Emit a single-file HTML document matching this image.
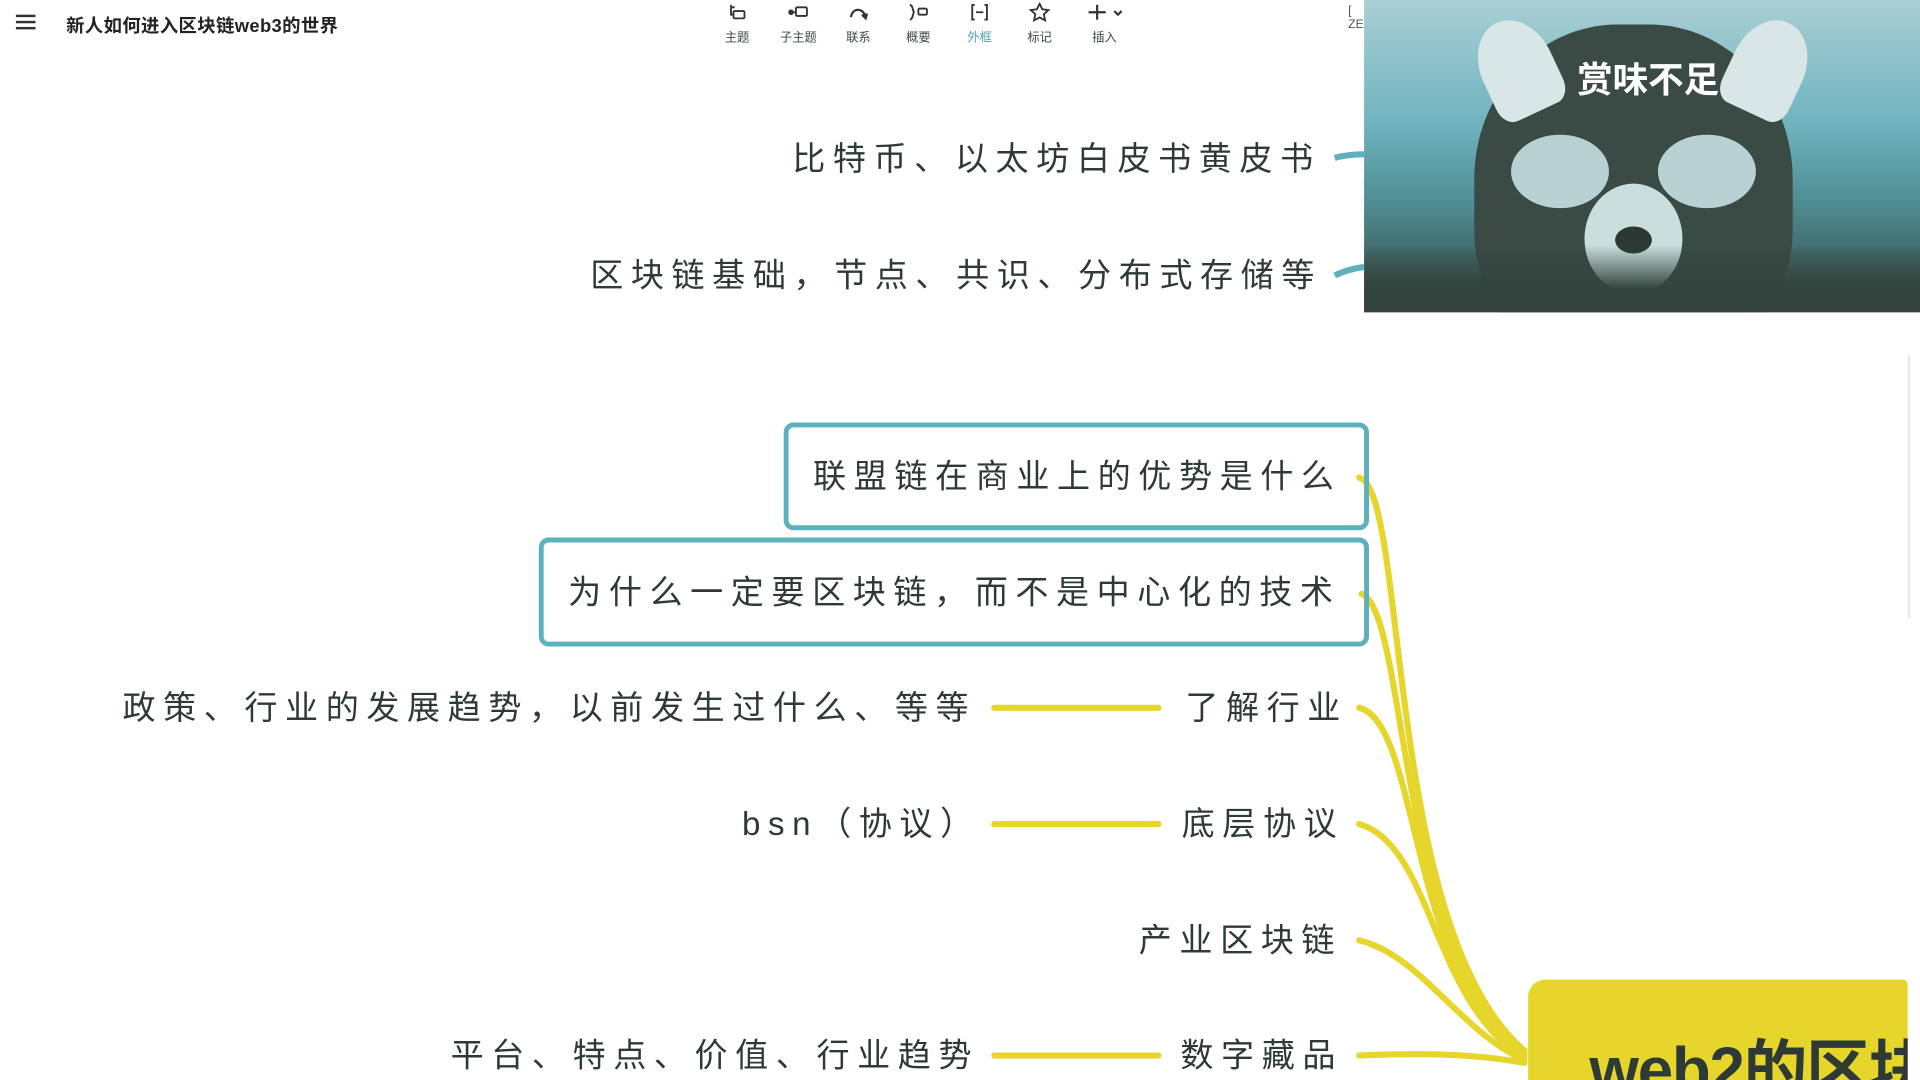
<!DOCTYPE html>
<html><head><meta charset="utf-8"><style>
html,body{margin:0;padding:0;width:1920px;height:1080px;overflow:hidden;background:#fff}
#s{position:absolute;left:0;top:0;width:1568px;height:882px;overflow:hidden;transform:scale(1.22449,1.22449);transform-origin:0 0;font-family:"Liberation Sans","Noto Sans CJK SC",sans-serif;color:#2e3a36}
.t{position:absolute;font-size:27px;letter-spacing:6.2px;white-space:nowrap;line-height:30px}
.box{position:absolute;border:4px solid #5fb0bd;border-radius:8px;box-sizing:border-box}
.tb{position:absolute;top:2px;text-align:center;font-size:10px;color:#3b4a46;width:40px}
.tb svg{display:block;margin:0 auto 4px}
</style></head><body><div id="s">
<div style="position:absolute;left:13px;top:12px;width:16px;height:2px;background:#333;box-shadow:0 5px 0 #333,0 10px 0 #333"></div>
<div style="position:absolute;left:54px;top:10px;font-size:15px;font-weight:bold;color:#222;letter-spacing:0.3px">新人如何进入区块链web3的世界</div>
<div class="tb" style="left:582px"><svg width="18" height="16" viewBox="0 0 18 16" fill="none" stroke="#333" stroke-width="1.5"><path d="M4 2v8h2M4 4h3"/><rect x="6" y="7" width="9" height="6" rx="1"/></svg>主题</div>
<div class="tb" style="left:632px"><svg width="20" height="16" viewBox="0 0 20 16" fill="none" stroke="#333" stroke-width="1.5"><circle cx="4" cy="8" r="1.5" fill="#333"/><path d="M5 8h3"/><rect x="8" y="4" width="9" height="7" rx="1"/></svg>子主题</div>
<div class="tb" style="left:681px"><svg width="20" height="16" viewBox="0 0 20 16" fill="none" stroke="#333" stroke-width="1.8"><path d="M4 12C5 4 14 4 16 12"/><path d="M13 10l3 3 1-4" fill="#333"/></svg>联系</div>
<div class="tb" style="left:730px"><svg width="20" height="16" viewBox="0 0 20 16" fill="none" stroke="#333" stroke-width="1.5"><path d="M3 2c3 0 2 6 4 6-2 0-1 6-4 6"/><rect x="10" y="5" width="7" height="5" rx="1"/></svg>概要</div>
<div class="tb" style="left:780px;color:#4aa3b3"><svg width="18" height="16" viewBox="0 0 18 16" fill="none" stroke="#333" stroke-width="1.5"><path d="M5 2H3v12h2M13 2h2v12h-2M6 8h6"/></svg>外框</div>
<div class="tb" style="left:829px"><svg width="18" height="16" viewBox="0 0 18 16" fill="none" stroke="#333" stroke-width="1.5"><path d="M9 1l2.2 4.6 5 .6-3.7 3.4 1 5L9 12.2 4.5 14.6l1-5L1.8 6.2l5-.6z"/></svg>标记</div>
<div class="tb" style="left:882px"><svg width="36" height="16" viewBox="0 0 36 16" fill="none" stroke="#333" stroke-width="1.8"><path d="M12 2v12M5 8h14M26 7l3 3 3-3"/></svg>插入</div>
<div style="position:absolute;left:1101px;top:4px;font-size:10px;color:#555">[<br>ZE</div>
<!-- photo -->
<div style="position:absolute;left:1114px;top:0;width:454px;height:255px;overflow:hidden;background:linear-gradient(180deg,#a9cfd4 0%,#6fb3bf 40%,#4f8d93 65%,#33433d 100%)">
<div style="position:absolute;left:90px;top:20px;width:260px;height:280px;border-radius:45% 45% 40% 40%;background:#3a4a44"></div>
<div style="position:absolute;left:95px;top:15px;width:60px;height:80px;border-radius:50% 50% 20% 20%;background:#d9e6e6;transform:rotate(-25deg)"></div>
<div style="position:absolute;left:300px;top:15px;width:60px;height:80px;border-radius:50% 50% 20% 20%;background:#d9e6e6;transform:rotate(25deg)"></div>
<div style="position:absolute;left:120px;top:110px;width:80px;height:60px;border-radius:50%;background:#b8d2d3"></div>
<div style="position:absolute;left:240px;top:110px;width:80px;height:60px;border-radius:50%;background:#b8d2d3"></div>
<div style="position:absolute;left:180px;top:150px;width:80px;height:90px;border-radius:50%;background:#c9dedd"></div>
<div style="position:absolute;left:205px;top:185px;width:30px;height:22px;border-radius:50%;background:#2b3833"></div>
<div style="position:absolute;left:0;top:200px;width:454px;height:60px;background:linear-gradient(180deg,rgba(51,67,61,0),#33433d 60%)"></div>
<div style="position:absolute;left:174px;top:42px;font-size:29px;color:#fff;font-weight:bold">赏味不足</div>
</div>
<div style="position:absolute;left:1558px;top:290px;width:2px;height:215px;background:#e3eceb"></div>
<svg style="position:absolute;left:0;top:0" width="1568" height="882" fill="none">
<path d="M1090 129 Q1100 126 1114 126" stroke="#5fb0bd" stroke-width="5"/>
<path d="M1090 225 Q1100 220 1114 218" stroke="#5fb0bd" stroke-width="5"/>
<g stroke="#e6d52b" stroke-width="5" stroke-linecap="round">
<path d="M1110 390 C1150 400 1130 760 1245 858"/>
<path d="M1112 485 C1150 500 1140 780 1245 860"/>
<path d="M1110 578 C1160 590 1150 800 1245 862"/>
<path d="M1110 673 C1170 690 1170 820 1245 864"/>
<path d="M1110 768 C1160 780 1190 840 1245 866"/>
<path d="M1110 862 C1160 860 1200 860 1245 868"/>
<path d="M812 578 H946"/><path d="M812 673 H946"/><path d="M812 862 H946"/>
</g></svg>
<div class="t" style="left:647px;top:115px">比特币、以太坊白皮书黄皮书</div>
<div class="t" style="left:482px;top:210px">区块链基础，节点、共识、分布式存储等</div>
<div class="box" style="left:640px;top:345px;width:478px;height:88px"></div>
<div class="t" style="left:664px;top:374px">联盟链在商业上的优势是什么</div>
<div class="box" style="left:440px;top:439px;width:678px;height:89px"></div>
<div class="t" style="left:464px;top:469px">为什么一定要区块链，而不是中心化的技术</div>
<div class="t" style="left:100px;top:563px">政策、行业的发展趋势，以前发生过什么、等等</div>
<div class="t" style="left:968px;top:563px">了解行业</div>
<div class="t" style="left:606px;top:658px">bsn（协议）</div>
<div class="t" style="left:965px;top:658px">底层协议</div>
<div class="t" style="left:930px;top:753px">产业区块链</div>
<div class="t" style="left:368px;top:847px">平台、特点、价值、行业趋势</div>
<div class="t" style="left:964px;top:847px">数字藏品</div>
<div style="position:absolute;left:1248px;top:800px;width:310px;height:90px;background:#e6d52b;border-radius:14px 4px 0 0"></div>
<div style="position:absolute;left:1298px;top:832px;font-size:52px;font-weight:bold;white-space:nowrap;color:#2e3a36;letter-spacing:-1px">web2的区块</div>
<div style="position:absolute;left:1558px;top:790px;width:10px;height:92px;background:#fff"></div>
</div></body></html>
